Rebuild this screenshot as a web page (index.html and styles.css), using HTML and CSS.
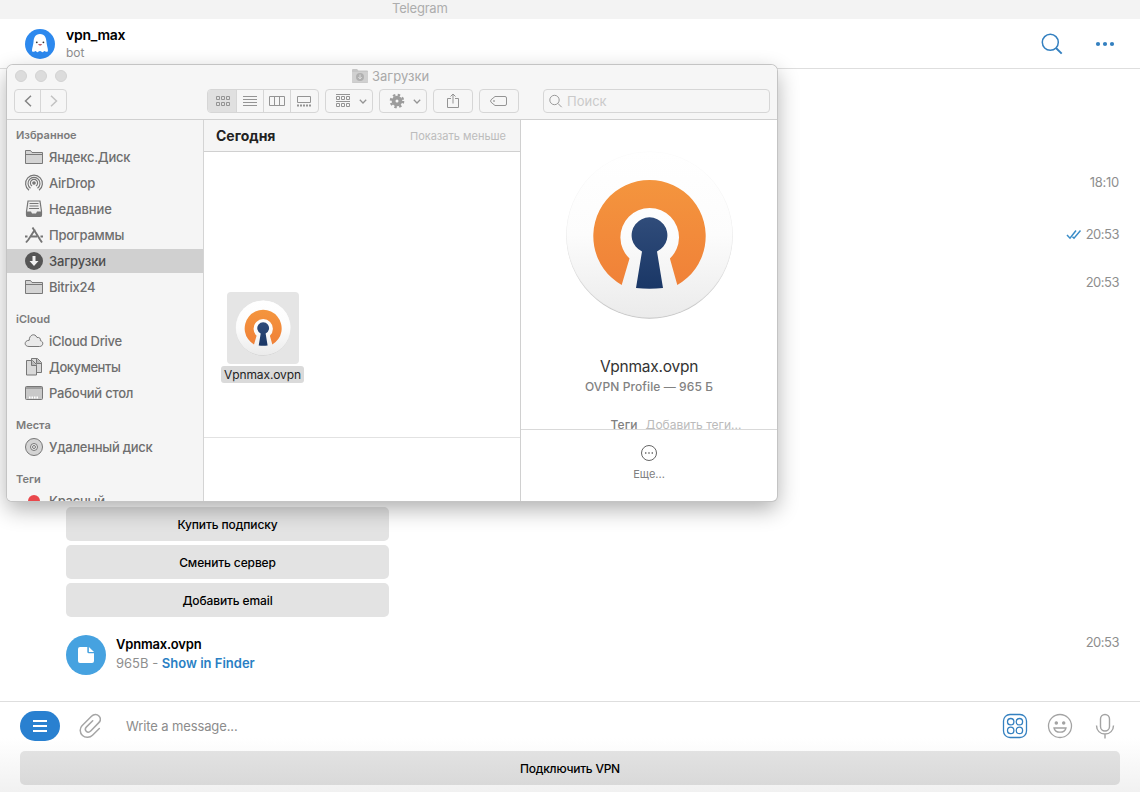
FILE: index.html
```html
<!DOCTYPE html>
<html lang="ru">
<head>
<meta charset="utf-8">
<title>Telegram</title>
<link rel="stylesheet" href="styles.css">
</head>
<body>
<svg class="defs" aria-hidden="true">
  <defs>
    <linearGradient id="plate" x1="0" y1="0" x2="0" y2="1"><stop offset="0" stop-color="#fff"/><stop offset=".5" stop-color="#fcfcfc"/><stop offset="1" stop-color="#ebebeb"/></linearGradient>
    <linearGradient id="rim" x1="0" y1="0" x2="0" y2="1"><stop offset="0" stop-color="#fbfbfb"/><stop offset="1" stop-color="#e4e4e4"/></linearGradient>
    <linearGradient id="shade" x1="0" y1="0" x2="0" y2="1"><stop offset="0" stop-color="#fff"/><stop offset=".4" stop-color="#eee"/><stop offset="1" stop-color="#c2c2c2"/></linearGradient>
    <linearGradient id="orange" x1="0" y1="0" x2="0" y2="1"><stop offset="0" stop-color="#f4953e"/><stop offset="1" stop-color="#f08138"/></linearGradient>
    <linearGradient id="navy" x1="0" y1="0" x2="0" y2="1"><stop offset="0" stop-color="#304c7a"/><stop offset="1" stop-color="#1a3766"/></linearGradient>
    <symbol id="vpn" viewBox="0 0 170 170">
      <circle cx="85.500" cy="85.500" r="83.200" fill="url(#shade)"/>
      <circle cx="85.500" cy="84.600" r="83.200" fill="url(#rim)"/>
      <circle cx="85.500" cy="84.600" r="82.700" fill="url(#plate)"/>
      <path d="M57.700 135A56.200 56.200 0 1 1 113.300 135L105.900 108.500A29.300 29.300 0 1 0 65.500 108.500Z" fill="url(#orange)"/>
      <path d="M78 101.500A17.900 17.900 0 1 1 93 101.500L99 138Q85.500 139.400 72 138Z" fill="url(#navy)"/>
    </symbol>
    <symbol id="folder" viewBox="0 0 20 18"><path d="M1.500 15.500v-13h5l1.500 2h10.500v11z" fill="#d4d4d4" stroke="#797979"/><path d="M1.500 6.500h17" stroke="#797979"/></symbol>
  </defs>
</svg>
<div class="app">
  <div class="titlebar"><span>Telegram</span></div>
  <header class="header">
    <svg class="avatar" viewBox="0 0 30 30"><circle cx="15" cy="15" r="15" fill="#2d89ee"/><path d="M15 5c-5 0-6.200 4-6.500 8-.3 4-2.500 9-.9 9.700 1.200.6 2.400-.8 3.100-.7.800.1.700 1.300 1.700 1.300s1.300-1.200 2.600-1.200 1.400 1.200 2.500 1.200 1-1.200 1.800-1.300c.7-.1 1.900 1.300 3.100.7 1.600-.7-.7-5.700-.9-9.700-.3-4-1.500-8-6.500-8z" fill="#fff"/><circle cx="11.800" cy="13.300" r=".9" fill="#333"/><circle cx="18.400" cy="13.300" r=".9" fill="#333"/><path d="M13 15.300h4.200q-2 2.500-4.200 0z" fill="#b02a3a"/></svg>
    <div class="peer"><b>vpn_max</b><span>bot</span></div>
    <svg class="h-search" viewBox="0 0 22 22" fill="none" stroke="#3480c0" stroke-width="1.500"><circle cx="9.300" cy="9.300" r="8"/><path d="M15 15l5.700 5.700" stroke-width="1.900"/></svg>
    <svg class="h-more" viewBox="0 0 20 6" fill="#3480c0"><circle cx="3" cy="3" r="2.100"/><circle cx="10" cy="3" r="2.100"/><circle cx="17" cy="3" r="2.100"/></svg>
  </header>

  <main class="chat">
    <div class="stamp early">18:10</div>
    <div class="stamp stamp-read"><svg viewBox="0 0 16 11" fill="none" stroke="#3a8dc8" stroke-width="1.500"><path d="M1 6l3 3.200 6-7.700M6.500 7.700l1.500 1.500L14.500 1.500"/></svg>20:53</div>
    <div class="stamp stamp-next">20:53</div>
    <div class="keyboard">
      <div class="key">Купить подписку</div>
      <div class="key">Сменить сервер</div>
      <div class="key">Добавить email</div>
    </div>
    <div class="file">
      <div class="file-icon"><svg viewBox="0 0 16 16" fill="#fff"><path d="M2 0h7.300v4.800q0 1.500 1.500 1.500H16V14q0 2-2 2H2q-2 0-2-2V2q0-2 2-2z"/><path d="M10.900 0L16 4.900h-5.100z"/></svg></div>
      <div class="file-info"><b>Vpnmax.ovpn</b><span>965B - <a>Show in Finder</a></span></div>
      <div class="file-time">20:53</div>
    </div>
  </main>

  <footer class="composer">
    <div class="entry">
      <div class="menu"><i></i><i></i><i></i></div>
      <svg class="clip" viewBox="0 0 22 26" fill="none" stroke="#a5a5a5" stroke-width="1.500" stroke-linecap="round"><path d="M20.300 15.500L13.500 22.200C11 24.700 6.500 25.300 3.500 22.500S.6 15.200 3 12.800L12.500 3.300C14.800 1 18 1 19.900 3s1.800 4.800-.3 6.900L11.700 18c-1.400 1.400-3.300 1.400-4.500.2s-1-3 .3-4.300l6.200-6.200"/></svg>
      <span class="hint">Write a message...</span>
      <svg class="c-bot" viewBox="0 0 26 26" fill="none" stroke="#3480c0" stroke-width="1.300"><rect x="1.500" y="1.500" width="23" height="23" rx="6.500"/><circle cx="8.700" cy="8.700" r="3.200"/><circle cx="17.400" cy="8.700" r="3.200"/><circle cx="8.700" cy="17.400" r="3.200"/><circle cx="17.400" cy="17.400" r="3.200"/></svg>
      <svg class="c-smile" viewBox="0 0 26 26" fill="none" stroke="#a3a3a3" stroke-width="1.300"><circle cx="13" cy="13" r="11.500"/><circle cx="9.300" cy="9.900" r="1.100" fill="#a3a3a3"/><circle cx="16.700" cy="9.900" r="1.100" fill="#a3a3a3"/><path d="M7 15h12c-.6 3-3 4.200-6 4.200S7.600 18 7 15z"/></svg>
      <svg class="c-mic" viewBox="0 0 20 26" fill="none" stroke="#a3a3a3" stroke-width="1.400"><rect x="5.500" y="1.500" width="9" height="16.500" rx="4.500"/><path d="M1.500 12.500c0 5 3.500 8.500 8.500 8.500s8.500-3.500 8.500-8.500M10 21v4.500"/></svg>
    </div>
    <div class="key wide">Подключить VPN</div>
  </footer>

  <section class="finder">
    <div class="f-head">
      <div class="f-title">
        <div class="lights"><i></i><i></i><i></i></div>
        <div class="f-name"><svg viewBox="0 0 16 14"><path d="M0 1q0-1 1-1h4l1.500 1.500H15q1 0 1 1V13q0 1-1 1H1q-1 0-1-1z" fill="#c6c6c6"/><path d="M0 3h16v10.500H0z" fill="#d0d0d0"/><circle cx="8" cy="8" r="4" fill="#b0b0b0"/><path d="M8 5.500v4M6.300 8L8 10l1.700-2" stroke="#ddd" fill="none"/></svg><span>Загрузки</span></div>
      </div>
      <div class="f-tools">
        <div class="nav"><span><svg viewBox="0 0 8 12" stroke="#858585"><path d="M7 .7L1.500 6 7 11.300"/></svg></span><span><svg viewBox="0 0 8 12" stroke="#c2c2c2"><path d="M1 .7L6.500 6 1 11.300"/></svg></span></div>
        <div class="views">
          <span class="on"><svg viewBox="0 0 16 12"><path d="M1.500 1.500h3v3h-3zM6.500 1.500h3v3h-3zM11.500 1.500h3v3h-3zM1.500 7.500h3v3h-3zM6.500 7.500h3v3h-3zM11.500 7.500h3v3h-3z"/></svg></span>
          <span><svg viewBox="0 0 16 12"><path d="M1 1.500h14M1 4.500h14M1 7.500h14M1 10.500h14"/></svg></span>
          <span><svg viewBox="0 0 16 12"><path d="M.5 1.500h15v9H.5zM5.500 1.500v9M10.500 1.500v9"/></svg></span>
          <span><svg viewBox="0 0 16 12"><path d="M1.500 1.500h13v6h-13z"/><path d="M1 10.500h14" stroke-width="2" stroke-dasharray="2 1"/></svg></span>
        </div>
        <div class="tool arrange"><svg class="g" viewBox="0 0 16 14"><path d="M1 .5h14M1 7.500h14M1.500 2.500h3v3h-3zM6.500 2.500h3v3h-3zM11.500 2.500h3v3h-3zM1.500 9.500h3v3h-3zM6.500 9.500h3v3h-3zM11.500 9.500h3v3h-3z"/></svg><svg class="chev" viewBox="0 0 8 5"><path d="M.8.800L4 4 7.200.8"/></svg></div>
        <div class="tool gear"><svg class="g" viewBox="0 0 16 16"><circle cx="8" cy="8" r="3.400" stroke="#9c9c9c" stroke-width="3.800"/><circle cx="8" cy="8" r="6.100" stroke="#9c9c9c" stroke-width="2.400" stroke-dasharray="2.400 2.391"/></svg><svg class="chev" viewBox="0 0 8 5"><path d="M.8.800L4 4 7.200.8"/></svg></div>
        <div class="tool share"><svg viewBox="0 0 12 16"><path d="M4 5.500H.5v9h11v-9H8M6 10.500V1M3.500 3.500L6 1l2.500 2.500"/></svg></div>
        <div class="tool tag"><svg viewBox="0 0 18 12"><path d="M5 1.500h10q1.500 0 1.500 1.500v6q0 1.500-1.500 1.500H5L1 7.200Q.2 6 1 4.800z"/><circle cx="4" cy="6" r=".5"/></svg></div>
        <div class="search"><svg viewBox="0 0 14 14" stroke="#999"><circle cx="5.500" cy="6" r="4.700"/><path d="M9 9.500l3.700 3.700"/></svg><span>Поиск</span></div>
      </div>
    </div>
    <div class="f-body">
      <nav class="side">
        <h4>Избранное</h4>
        <div class="item"><svg viewBox="0 0 20 18"><use href="#folder"/></svg><span>Яндекс.Диск</span></div>
        <div class="item"><svg viewBox="0 0 20 18" fill="none" stroke="#777" stroke-width="1.200"><path d="M5 16.300A8.400 8.400 0 1 1 15 16.300M6.500 14.200A6 6 0 1 1 13.500 14.200M8 12A3.600 3.600 0 1 1 12 12"/><circle cx="10" cy="9" r="1.200" fill="#777"/></svg><span>AirDrop</span></div>
        <div class="item"><svg viewBox="0 0 20 18"><path d="M4 1h12l1.500 10.500V15q0 1.500-1.500 1.500H4q-1.500 0-1.500-1.500v-3.500z" fill="#eee" stroke="#777" stroke-width="1.200"/><path d="M5.500 3.500h9M5.500 6h9M5 8.500h10" stroke="#777"/><path d="M2.500 11.500H7l1 2h4l1-2h4.500v5h-15z" fill="#777"/></svg><span class="snug">Недавние</span></div>
        <div class="item"><svg viewBox="0 0 20 18" fill="none" stroke="#747474" stroke-width="1.900"><path d="M8.500 1.500l7.500 12 2 3M11 3.500L4.500 13.500 2 16.500M1 10.500h2.500M7 10.500h6M16.500 10.500H19"/></svg><span>Программы</span></div>
        <div class="item active"><svg viewBox="0 0 20 18"><circle cx="10" cy="9" r="9" fill="#555"/><path d="M8.500 4h3v5h3L10 14 5.500 9h3z" fill="#f2f2f2"/></svg><span class="snug">Загрузки</span></div>
        <div class="item"><svg viewBox="0 0 20 18"><use href="#folder"/></svg><span>Bitrix24</span></div>
        <h4>iCloud</h4>
        <div class="item"><svg viewBox="0 0 20 18"><path d="M5 14.500c-5.300 0-5-6.200.2-6.200C5.200 2.500 11 .8 13 5.500c2.400-.5 3.900 1 3.400 3.200 3.500.6 3.100 5.800-.9 5.800z" fill="#eaeaea" stroke="#777"/></svg><span>iCloud Drive</span></div>
        <div class="item"><svg viewBox="0 0 20 18" fill="#d9d9d9" stroke="#777"><path d="M7.500.5h6l4 4v10h-10z"/><path d="M12.500.5v5h5" fill="#b5b5b5"/><path d="M2.500 2.500h6l4 4v10.500h-10z"/><path d="M7.500 2.500v5h5" fill="#b5b5b5"/></svg><span class="tight">Документы</span></div>
        <div class="item"><svg viewBox="0 0 20 18"><rect x="1.500" y="2.500" width="17" height="13" rx="1" fill="#c9c9c9" stroke="#777"/><path d="M1.500 4h17" stroke="#777"/><path d="M5 13.500h10" stroke="#fff" stroke-width="2" stroke-dasharray="1.500 1"/></svg><span>Рабочий стол</span></div>
        <h4>Места</h4>
        <div class="item"><svg viewBox="0 0 20 18" fill="none" stroke="#777"><circle cx="10" cy="9" r="8.500" fill="#d4d4d4"/><circle cx="10" cy="9" r="3.500" fill="#eee"/><circle cx="10" cy="9" r="1.500"/></svg><span>Удаленный диск</span></div>
        <h4>Теги</h4>
        <div class="item"><svg viewBox="0 0 20 18"><circle cx="10" cy="9" r="6" fill="#e9484c"/></svg><span>Красный</span></div>
      </nav>
      <div class="files">
        <div class="f-group"><b>Сегодня</b><span>Показать меньше</span></div>
        <div class="f-grid"><div class="tile"><div class="thumb"><svg viewBox="0 0 170 170"><use href="#vpn"/></svg></div><span>Vpnmax.ovpn</span></div></div>
        <div class="f-rest"></div>
      </div>
      <div class="preview">
        <div class="p-info">
          <svg class="p-icon" viewBox="0 0 170 170"><use href="#vpn"/></svg>
          <div class="p-name">Vpnmax.ovpn</div>
          <div class="p-kind">OVPN Profile — 965 Б</div>
          <div class="p-tags"><b>Теги</b><span>Добавить теги...</span></div>
        </div>
        <div class="p-more"><svg viewBox="0 0 18 18"><circle cx="9" cy="9" r="7.500" fill="none" stroke="#666"/><path d="M5 9h1.400M8.300 9h1.400M11.600 9H13" stroke="#666" stroke-width="1.500"/></svg><span>Еще...</span></div>
      </div>
    </div>
  </section>
</div>
</body>
</html>
```

FILE: styles.css
```css
* { box-sizing: border-box; }
body { margin: 0; font: 13px/16px Inter, "Noto Sans", sans-serif; color: #000; }
svg { display: block; flex: none; }
.defs { position: absolute; width: 0; height: 0; }
.app { position: relative; width: 1140px; height: 792px; overflow: hidden; display: flex; flex-direction: column; background: #fff; white-space: nowrap; }

.titlebar { height: 19px; background: #f3f3f3; color: #adadad; padding-left: 392px; letter-spacing: -.2px; }
.header { height: 50px; border-bottom: 1px solid #dedede; display: flex; align-items: center; padding: 0 25px; }
.avatar { width: 30px; height: 30px; }
.peer { display: flex; flex-direction: column; margin-left: 11px; flex: 1; padding-top: 2px; }
.peer b { font-size: 14px; line-height: 16px; font-weight: 600; letter-spacing: -.28px; }
.peer span { font-size: 12px; line-height: 19px; color: #8f8f8f; }
.h-search { width: 22px; height: 22px; margin-right: 32px; }
.h-more { width: 20px; height: 6px; }

.chat { flex: 1; padding: 103px 21px 0 66px; display: flex; flex-direction: column; }
.stamp { display: flex; justify-content: flex-end; align-items: center; height: 20px; color: #8e8e8e; letter-spacing: -.5px; }
.early { letter-spacing: -.25px; }
.stamp svg { width: 16px; height: 11px; margin-right: 4px; }
.stamp-read { margin-top: 32px; }
.stamp-next { margin-top: 28px; }
.keyboard { display: flex; flex-direction: column; gap: 4px; width: 323px; margin-top: 215px; }
.key { height: 34px; border-radius: 5px; background: #e3e3e3; display: flex; align-items: center; justify-content: center; padding-top: 2px; font-size: 12px; font-weight: 500; letter-spacing: -.12px; }
.file { display: flex; height: 40px; margin-top: 18px; }
.file-icon { width: 40px; height: 40px; border-radius: 50%; background: #46a2e0; display: flex; align-items: center; justify-content: center; }
.file-icon svg { width: 16px; height: 16px; }
.file-info { flex: 1; margin-left: 10px; display: flex; flex-direction: column; }
.file-info b { line-height: 19px; font-weight: 600; letter-spacing: -.2px; }
.file-info span { line-height: 19px; color: #8e8e8e; }
.file-info a { color: #2a7fc4; font-weight: 600; }
.file-time { color: #8e8e8e; letter-spacing: -.5px; line-height: 15px; }

.composer { height: 91px; border-top: 1px solid #dedede; background: linear-gradient(#fff 40%, #f1f1f1); }
.entry { height: 48px; margin-bottom: 1px; display: flex; align-items: center; padding: 0 25px 0 20px; }
.menu { width: 40px; height: 30px; border-radius: 15px; background: #2980d0; display: flex; flex-direction: column; align-items: center; justify-content: center; gap: 3px; }
.menu i { width: 14px; height: 2px; background: #fff; }
.clip { width: 22px; height: 26px; margin-left: 19px; }
.hint { flex: 1; margin-left: 25px; color: #8c8c8c; letter-spacing: -.12px; }
.c-bot, .c-smile { width: 26px; height: 26px; }
.c-smile { margin-left: 19px; }
.c-mic { width: 20px; height: 26px; margin-left: 22px; }
.wide { margin: 0 20px; background: linear-gradient(#e2e2e2, #d9d9d9); letter-spacing: -.25px; }

.finder { position: absolute; left: 7px; top: 65px; width: 770px; height: 436px; border-radius: 6px 6px 5px 5px; background: #fff; box-shadow: 0 0 0 1px #c4c4c4, 0 8px 22px rgba(0,0,0,.32); display: flex; flex-direction: column; overflow: hidden; }
.f-head { height: 55px; background: #f6f6f6; border-bottom: 1px solid #d0d0d0; }
.f-title { height: 24px; display: flex; align-items: center; padding: 0 8px; }
.lights { display: flex; gap: 8px; width: 337px; padding-bottom: 3px; }
.lights i { width: 12px; height: 12px; border-radius: 50%; background: #dcdcdc; border: 1px solid #d2d2d2; }
.f-name { display: flex; align-items: center; gap: 4px; color: #a9a9a9; padding-bottom: 2px; }
.f-name svg { width: 16px; height: 14px; }
.f-tools { display: flex; height: 24px; padding-left: 7px; }
.f-tools svg { fill: none; }
.nav { display: flex; width: 53px; border: 1px solid #d6d6d6; border-radius: 4px; }
.nav span { flex: 1; display: flex; align-items: center; justify-content: center; }
.nav span + span { border-left: 1px solid #d6d6d6; }
.nav svg { width: 8px; height: 12px; stroke-width: 1.500; }
.views { display: flex; width: 112px; margin-left: 140px; border: 1px solid #d6d6d6; border-radius: 4px; overflow: hidden; }
.views span { flex: 0 0 27px; display: flex; align-items: center; justify-content: center; }
.views span + span { border-left: 1px solid #d6d6d6; }
.views .on { background: #e0e0e0; flex: 0 0 28px; padding-left: 1px; }
.views svg { width: 16px; height: 12px; stroke: #949494; }
.tool { display: flex; align-items: center; justify-content: center; border: 1px solid #d6d6d6; border-radius: 4px; }
.tool svg { stroke: #949494; }
.arrange { width: 48px; margin-left: 6px; gap: 8px; padding-left: 4px; }
.arrange .g { width: 16px; height: 14px; }
.chev { width: 8px; height: 5px; stroke-width: 1.300; }
.gear { width: 48px; margin-left: 6px; gap: 8px; padding-left: 4px; }
.gear .g { width: 16px; height: 16px; }
.share { width: 40px; margin-left: 6px; }
.share svg { width: 12px; height: 16px; }
.tag { width: 40px; margin-left: 6px; }
.tag svg { width: 18px; height: 12px; }
.search { width: 227px; margin-left: 24px; border: 1px solid #d6d6d6; border-radius: 4px; display: flex; align-items: center; padding-left: 5px; color: #cacaca; gap: 4px; }
.search svg { width: 14px; height: 14px; }

.f-body { flex: 1; min-height: 0; display: flex; }
.side { width: 197px; background: #f5f5f5; border-right: 1px solid #d4d4d4; padding-top: 6px; overflow: hidden; }
.side h4 { margin: 11px 0 1px 9px; height: 18px; line-height: 18px; font-size: 11px; font-weight: 600; color: #7b7b7b; }
.side h4:first-child { margin-top: 0; }
.item { height: 24px; margin-bottom: 2px; padding-left: 17px; display: flex; align-items: center; gap: 5px; color: #6e6e6e; font-weight: 450; letter-spacing: -.25px; }
.item svg { width: 20px; height: 18px; }
.snug { letter-spacing: -.12px; }
.tight { letter-spacing: -.45px; }
.active { background: #d0d0d0; color: #4d4d4d; font-weight: 500; }
.files { width: 317px; border-right: 1px solid #d0d0d0; display: flex; flex-direction: column; }
.f-group { height: 32px; background: #f5f5f5; border-bottom: 1px solid #d0d0d0; display: flex; align-items: center; justify-content: space-between; padding: 0 14px 0 12px; }
.f-group b { font-size: 14px; font-weight: 700; color: #222; }
.f-group span { font-size: 11px; color: #bcbcbc; }
.f-grid { height: 286px; border-bottom: 1px solid #e2e2e2; padding: 140px 0 0 17px; display: flex; }
.tile { width: 83px; height: 92px; display: flex; flex-direction: column; align-items: center; gap: 2px; }
.thumb { width: 72px; height: 72px; border-radius: 4px; background: #e5e5e5; display: flex; align-items: center; justify-content: center; }
.thumb svg { width: 56px; height: 56px; }
.tile span { width: 83px; height: 17px; line-height: 17px; border-radius: 3px; background: #dadada; text-align: center; font-size: 12px; letter-spacing: -.1px; color: #222; }
.f-rest { flex: 1; }
.preview { flex: 1; display: flex; flex-direction: column; }
.p-info { height: 310px; border-bottom: 1px solid #d9d9d9; overflow: hidden; display: flex; flex-direction: column; align-items: center; padding-top: 30px; }
.p-icon { width: 170px; height: 170px; }
.p-name { margin-top: 37px; font-size: 15.5px; line-height: 20px; letter-spacing: -.25px; color: #333; }
.p-kind { margin-top: 2px; font-size: 12px; line-height: 16px; font-weight: 500; letter-spacing: .1px; color: #828282; }
.p-tags { margin-top: 21px; display: flex; gap: 8px; font-size: 12px; line-height: 18px; padding-left: 54px; color: #bbb; }
.p-tags b { font-weight: 500; color: #808080; letter-spacing: .1px; }
.p-more { flex: 1; display: flex; flex-direction: column; align-items: center; padding-top: 14px; gap: 4px; font-size: 11px; color: #808080; }
.p-more svg { width: 18px; height: 18px; }
```
